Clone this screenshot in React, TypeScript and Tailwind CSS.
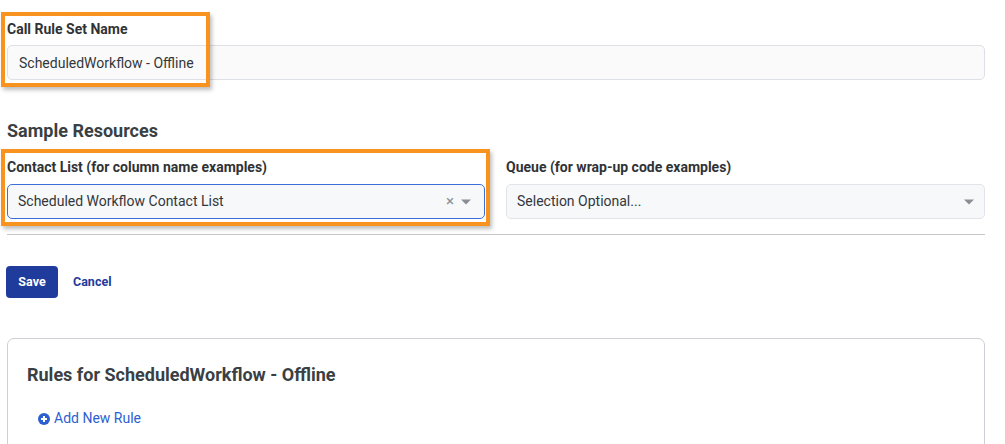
import { useState } from "react"

function Caret() {
  return (
    <svg width="10" height="6" viewBox="0 0 10 6" className="text-[#8a8f96]">
      <path d="M0 0.5h10L5 5.5z" fill="currentColor" />
    </svg>
  )
}

function Highlight({ className }: { className: string }) {
  return (
    <div
      className={`pointer-events-none absolute border-[4px] border-[#f7931e] shadow-[2px_3px_4px_rgba(0,0,0,0.25)] ${className}`}
    />
  )
}

export default function App() {
  const [name, setName] = useState("ScheduledWorkflow - Offline")

  return (
    <div
      className="relative min-h-[444px] bg-white pl-[7px] pr-[20px] pt-[21px] text-[#343a40]"
      style={{ fontFamily: "Roboto, 'Liberation Sans', sans-serif" }}
    >
      <label className="block text-[14px] leading-4 font-bold text-[#303336]">
        Call Rule Set Name
      </label>
      <input
        value={name}
        onChange={(e) => setName(e.target.value)}
        className="mt-2 block h-[35px] w-full rounded-[5px] border border-[#dde1e6] bg-[#fafafa] px-[11px] text-[14px] text-[#33373b] outline-none"
      />

      <h2 className="mt-[41px] text-[18px] leading-5 font-bold text-[#3a3f44]">
        Sample Resources
      </h2>

      <div className="mt-[18px] grid grid-cols-[478px_1fr] gap-x-[21px]">
        <div>
          <label className="block text-[14px] leading-4 font-bold text-[#303336]">
            Contact List (for column name examples)
          </label>
          <div className="mt-[9px] flex h-[35px] items-center rounded-[5px] border border-[#3b6fd8] bg-[#f7f8fa] pr-[13px] pl-[10px] text-[14px] text-[#33373b]">
            <span className="grow">Scheduled Workflow Contact List</span>
            <span className="mr-[7px] text-[15px] leading-none text-[#8a8f96]">×</span>
            <Caret />
          </div>
        </div>
        <div>
          <label className="block text-[14px] leading-4 font-bold text-[#303336]">
            Queue (for wrap-up code examples)
          </label>
          <div className="mt-[9px] flex h-[35px] items-center rounded-[5px] border border-[#e1e4e8] bg-[#f7f8fa] pr-[10px] pl-[10px] text-[14px] text-[#33373b]">
            <span className="grow">Selection Optional...</span>
            <Caret />
          </div>
        </div>
      </div>

      <hr className="mt-[15px] border-t border-[#c4c6c9]" />

      <div className="mt-[31px] flex items-center gap-[15px]">
        <button className="-ml-px h-[32px] w-[52px] rounded-[4px] bg-[#1f3b9b] text-[12.5px] font-bold text-white">
          Save
        </button>
        <button className="text-[12.5px] font-bold text-[#1f3b9b]">Cancel</button>
      </div>

      <div className="mt-[40px] h-[120px] rounded-[7px] border border-[#cdd1d7] px-[19px] pt-[26px]">
        <h3 className="text-[18px] leading-5 font-bold text-[#3a3f44]">
          Rules for ScheduledWorkflow - Offline
        </h3>
        <button className="mt-[23px] ml-[11px] flex items-center gap-[4px] text-[14px] text-[#2c5fd1]">
          <svg width="12" height="12" viewBox="0 0 12 12">
            <circle cx="6" cy="6" r="6" fill="currentColor" />
            <path d="M6 3v6M3 6h6" stroke="white" strokeWidth="2" />
          </svg>
          Add New Rule
        </button>
      </div>

      <Highlight className="top-[12px] left-[1px] h-[75px] w-[209px]" />
      <Highlight className="top-[149px] left-[1px] h-[77px] w-[489px]" />
    </div>
  )
}
